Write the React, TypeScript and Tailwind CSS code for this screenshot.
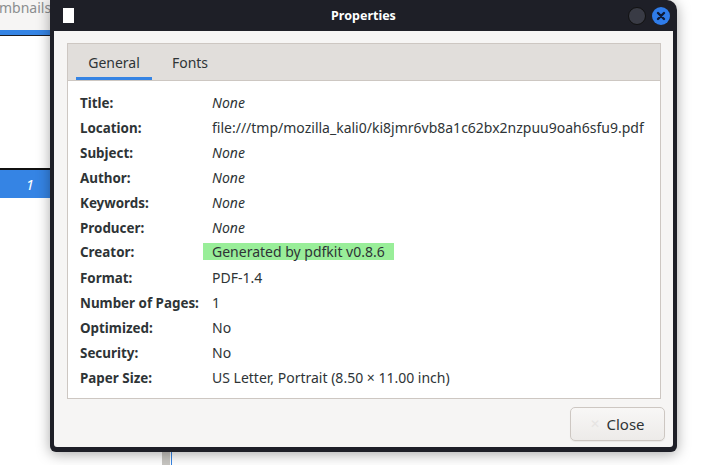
import React from "react";

const rows: { label: string; value: string; italic?: boolean; hl?: boolean }[] = [
  { label: "Title:", value: "None", italic: true },
  { label: "Location:", value: "file:///tmp/mozilla_kali0/ki8jmr6vb8a1c62bx2nzpuu9oah6sfu9.pdf" },
  { label: "Subject:", value: "None", italic: true },
  { label: "Author:", value: "None", italic: true },
  { label: "Keywords:", value: "None", italic: true },
  { label: "Producer:", value: "None", italic: true },
  { label: "Creator:", value: "Generated by pdfkit v0.8.6", hl: true },
  { label: "Format:", value: "PDF-1.4" },
  { label: "Number of Pages:", value: "1" },
  { label: "Optimized:", value: "No" },
  { label: "Security:", value: "No" },
  { label: "Paper Size:", value: "US Letter, Portrait (8.50 × 11.00 inch)" },
];

export default function App() {
  return (
    <div
      className="relative w-[707px] h-[465px] overflow-hidden bg-white"
      style={{ fontFamily: '"Noto Sans", "Open Sans", sans-serif' }}
    >
      {/* background app window */}
      <div className="flex flex-col w-[120px] h-full">
        <div className="h-[30px] bg-[#f6f5f4] text-[14px] leading-[14px] text-[#8b8e8f] -ml-[1px] pt-[1px]">
          mbnails
        </div>
        <div className="h-[5px] w-full bg-[#3584e4]" />
        <div className="h-[1px] w-full bg-[#1c1d24]" />
        <div className="h-[132px]" />
        <div className="h-[2px] w-full bg-[#111]" />
        <div className="h-[28px] bg-[#3584e4] flex items-center">
          <span className="w-[40px] text-right text-white italic text-[15px] pr-[6px]">1</span>
        </div>
        <div className="flex-1" />
      </div>
      <div className="absolute bottom-0 left-[162px] w-[8px] h-[14px] bg-[#c8c6c2]" />
      <div className="absolute bottom-0 left-[171px] w-[1px] h-[14px] bg-[#3584e4]" />

      {/* dialog */}
      <div className="absolute left-[50px] top-0 w-[627px] h-[452px] bg-[#1e1f27] rounded-tr-[10px] rounded-b-[6px] flex flex-col shadow-[0_2px_14px_rgba(0,0,0,0.35)]">
        <div className="h-[31px] relative flex items-center justify-center">
          <div className="absolute left-[13px] top-[8px] w-[11px] h-[15px] bg-white" />
          <span className="text-white text-[12.5px] font-bold pt-[2px]">Properties</span>
          <div className="absolute right-[31px] top-[7px] w-[18px] h-[18px] rounded-full border border-[#111] bg-[#393b45]" />
          <div className="absolute right-[7px] top-[7px] w-[18px] h-[18px] rounded-full bg-[#2f7ce9] flex items-center justify-center">
            <svg width="10" height="10" viewBox="0 0 10 10">
              <path d="M2 2L8 8M8 2L2 8" stroke="#0e1a36" strokeWidth="2.4" strokeLinecap="round" />
            </svg>
          </div>
        </div>
        <div className="flex-1 mx-[4px] mb-[5px] bg-[#f6f5f4] rounded-b-[3px] flex flex-col pt-[12px] pl-[13px] pr-[12px]">
          <div className="h-[356px] border border-[#cdc7c2] bg-white flex flex-col">
            <div className="h-[37px] bg-[#e1dedb] border-b border-[#cdc7c2] flex pl-[8px]">
              <div className="w-[76px] relative flex items-center justify-center text-[14px] text-[#2e3436]">
                General
                <div className="absolute left-0 right-0 bottom-0 h-[3px] bg-[#3584e4]" />
              </div>
              <div className="w-[76px] flex items-center justify-center text-[14px] text-[#2e3436]">Fonts</div>
            </div>
            <div className="flex flex-col pt-[9px] pl-[12px] text-[14px] text-[#2e3436]">
              {rows.map((r) => (
                <div key={r.label} className="h-[25px] leading-[25px] flex items-baseline">
                  <span className="w-[132px] shrink-0 font-bold text-[13.4px]">{r.label}</span>
                  {r.hl ? (
                    <span className="inline-block bg-[#99ee99] -ml-[9px] pl-[9px] pr-[9px] h-[17px] leading-[17px]">{r.value}</span>
                  ) : (
                    <span className={r.italic ? "italic" : ""}>{r.value}</span>
                  )}
                </div>
              ))}
            </div>
          </div>
          <div className="flex justify-end pt-[8px]">
            <button className="w-[95px] h-[34px] mr-[-4px] rounded-[5px] border border-[#cdc7c2] bg-gradient-to-b from-[#f8f7f6] to-[#edebe9] flex items-center justify-center gap-[6px] text-[15px] text-[#2e3436] shadow-[0_1px_1px_rgba(0,0,0,0.06)]">
              <span className="text-[#e6e4e2] text-[12px]">✕</span>
              Close
            </button>
          </div>
        </div>
      </div>
    </div>
  );
}
